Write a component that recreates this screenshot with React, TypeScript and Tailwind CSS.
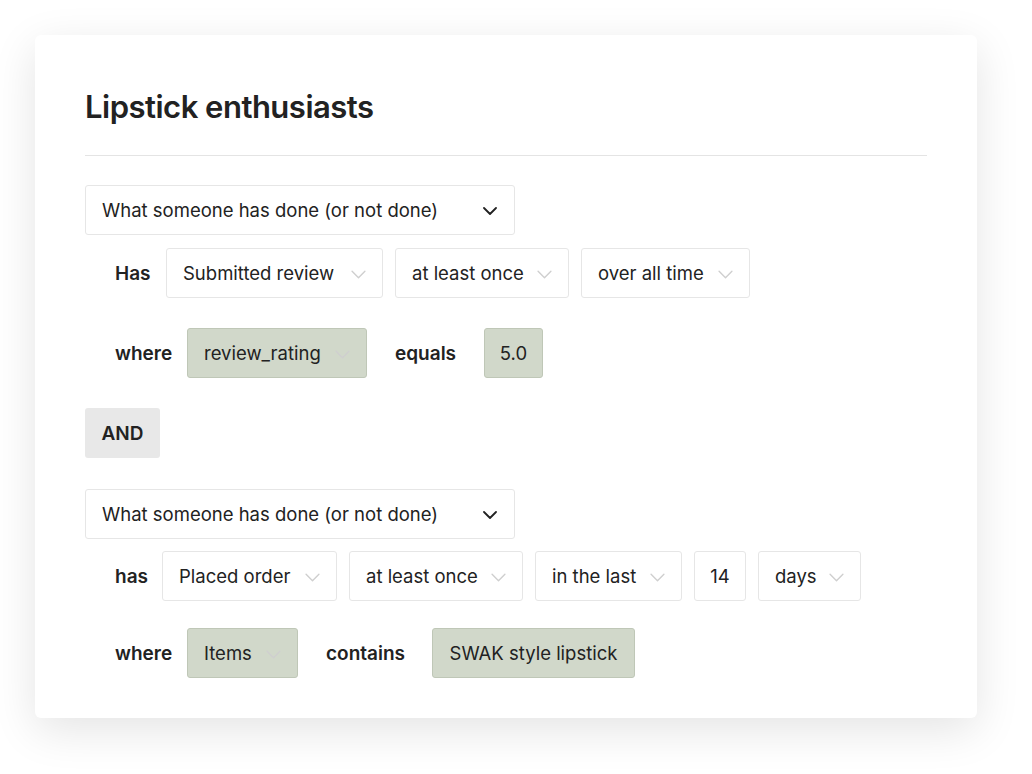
import { ReactNode } from 'react'

function Chevron({ dark }: { dark?: boolean }) {
  return (
    <svg
      width={dark ? 14 : 15}
      height={dark ? 8 : 9}
      viewBox="0 0 14 8"
      fill="none"
      className="shrink-0"
    >
      <path
        d="M1 1l6 6 6-6"
        stroke={dark ? '#222' : '#cfcfcf'}
        strokeWidth={dark ? 1.8 : 1.3}
        strokeLinecap="round"
        strokeLinejoin="round"
      />
    </svg>
  )
}

function Select({
  label,
  w,
  green,
  chevron = true,
}: {
  label: string
  w: string
  green?: boolean
  chevron?: boolean
}) {
  return (
    <div
      className={[
        'flex h-[50px] shrink-0 items-center rounded-[3px] border px-4 pt-[2px] text-[18.5px]',
        w,
        green ? 'border-[#bfc7b7] bg-[#d1d8ca]' : 'border-[#e6e6e6] bg-white',
        chevron ? 'justify-between' : 'justify-center',
      ].join(' ')}
    >
      <span>{label}</span>
      {chevron && <Chevron />}
    </div>
  )
}

function Row({ children, className = '' }: { children: ReactNode; className?: string }) {
  return <div className={`flex items-center pl-[30px] ${className}`}>{children}</div>
}

function Label({ children, className = '' }: { children: ReactNode; className?: string }) {
  return <div className={`shrink-0 pt-[2px] text-[19px] font-semibold ${className}`}>{children}</div>
}

function TypeSelect() {
  return (
    <div className="flex h-[50px] w-[430px] items-center justify-between rounded-[3px] border border-[#e6e6e6] bg-white pl-4 pr-[17px] pt-[2px] text-[18.5px]">
      <span>What someone has done (or not done)</span>
      <Chevron dark />
    </div>
  )
}

export default function App() {
  return (
    <div
      className="min-h-screen bg-white p-[35px] pr-[55px] text-[#222]"
      style={{ fontFamily: 'Inter, "Noto Sans", sans-serif' }}
    >
      <div className="h-[683px] w-[942px] rounded-[6px] bg-white px-[50px] pt-[53px] shadow-[0_12px_45px_rgba(0,0,0,0.11)]">
        <h1 className="text-[31px] font-semibold leading-[38px] tracking-[-0.5px]">Lipstick enthusiasts</h1>
        <div className="mt-[29px] h-px bg-[#e4e4e4]" />

        <div className="mt-[29px]">
          <TypeSelect />
        </div>
        <Row className="mt-[13px] gap-3">
          <Label className="w-[39px]">Has</Label>
          <Select label="Submitted review" w="w-[217px]" />
          <Select label="at least once" w="w-[174px]" />
          <Select label="over all time" w="w-[169px]" />
        </Row>
        <Row className="mt-[30px]">
          <Label className="mr-3 w-[60px]">where</Label>
          <Select label="review_rating" w="w-[180px]" green />
          <Label className="mx-7 w-[61px]">equals</Label>
          <Select label="5.0" w="w-[59px]" green chevron={false} />
        </Row>

        <div className="mt-[30px] flex h-[50px] w-[75px] items-center justify-center rounded-[3px] bg-[#e8e8e8] pt-[2px] text-[19px] font-semibold">
          AND
        </div>

        <div className="mt-[31px]">
          <TypeSelect />
        </div>
        <Row className="mt-[12px] gap-3">
          <Label className="w-[35px]">has</Label>
          <Select label="Placed order" w="w-[175px]" />
          <Select label="at least once" w="w-[174px]" />
          <Select label="in the last" w="w-[147px]" />
          <Select label="14" w="w-[52px]" chevron={false} />
          <Select label="days" w="w-[103px]" />
        </Row>
        <Row className="mt-[27px]">
          <Label className="mr-3 w-[60px]">where</Label>
          <Select label="Items" w="w-[111px]" green />
          <Label className="mx-7 w-[78px]">contains</Label>
          <Select label="SWAK style lipstick" w="w-[203px]" green chevron={false} />
        </Row>
      </div>
    </div>
  )
}
